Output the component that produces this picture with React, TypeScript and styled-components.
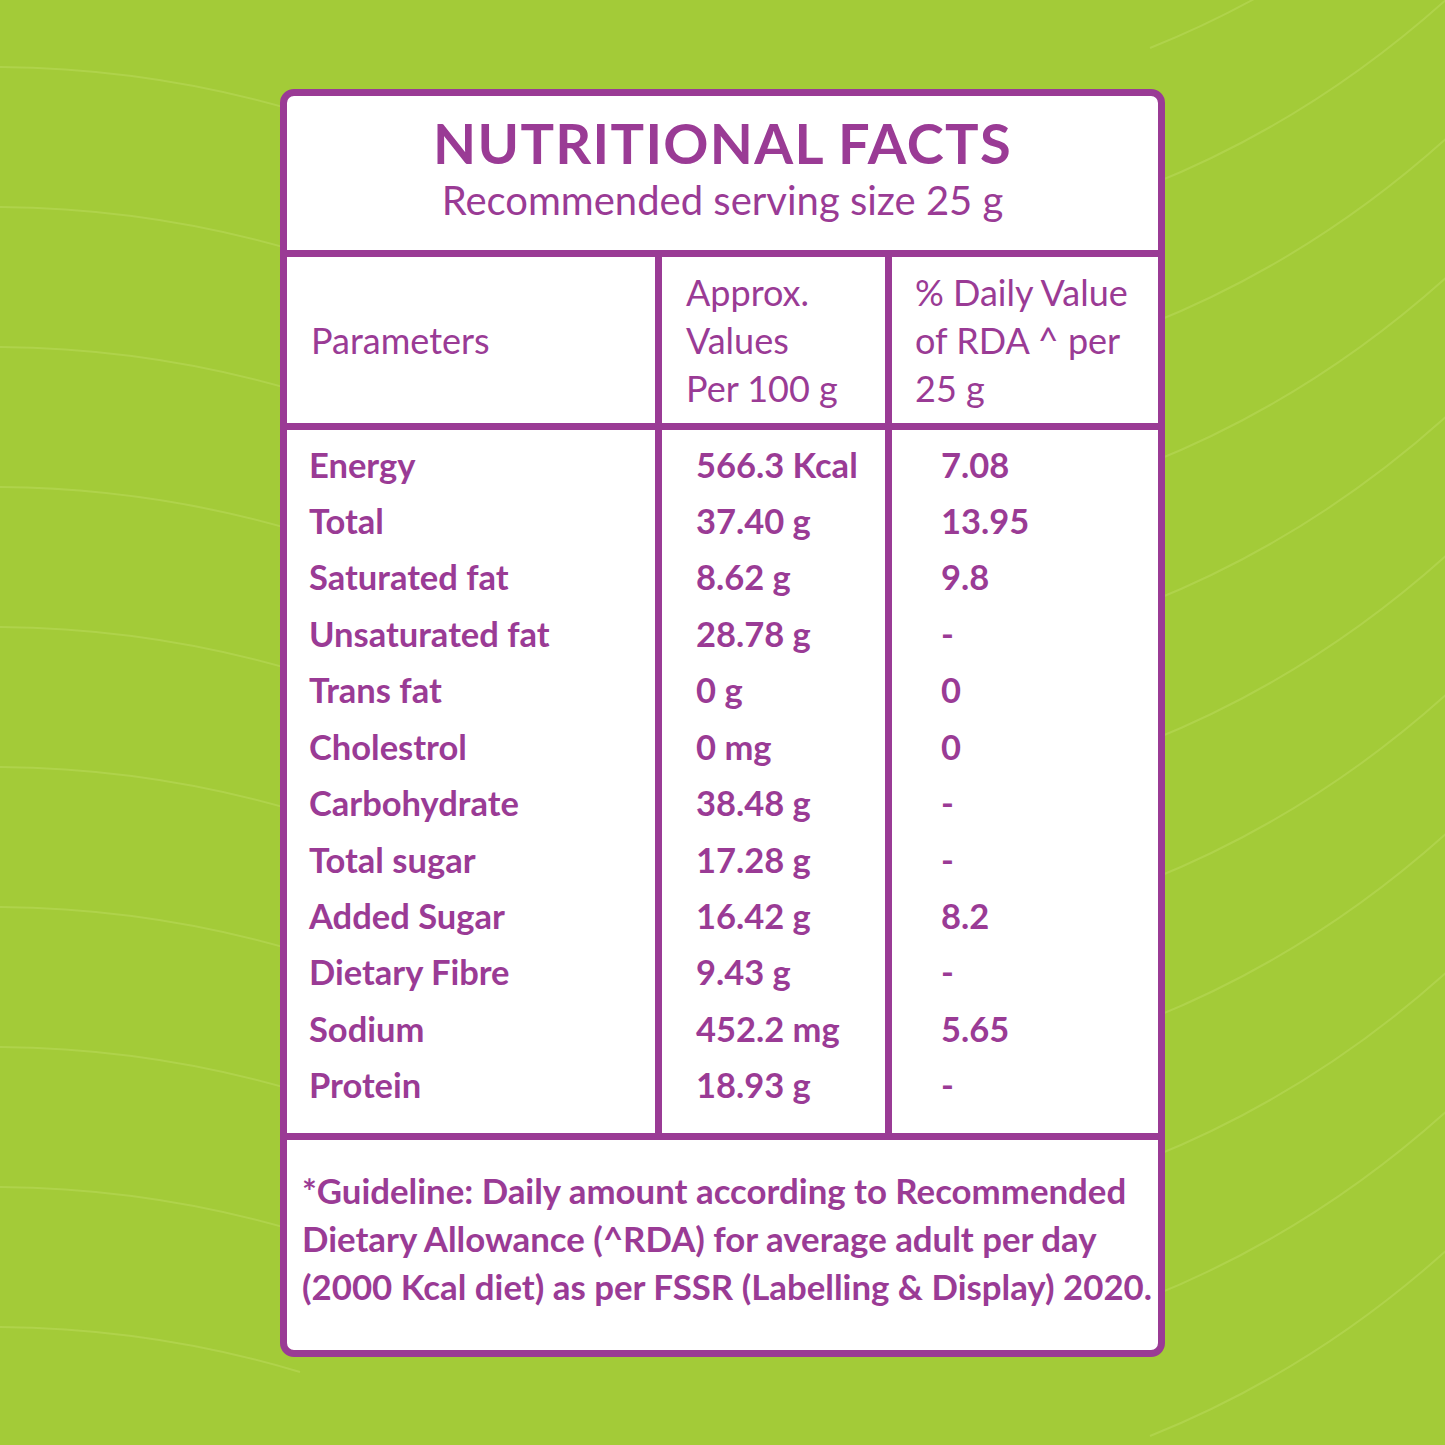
import React from "react";
import styled, { createGlobalStyle } from "styled-components";

const PURPLE = "#9a3b95";
const GREEN = "#a3cb38";

const Global = createGlobalStyle`
  html, body { margin: 0; padding: 0; }
  body { background: ${GREEN}; font-family: Lato, "Open Sans", sans-serif; }
`;

const Page = styled.div`
  position: relative;
  width: 1445px;
  height: 1445px;
  display: flex;
  align-items: center;
  justify-content: center;
  background: ${GREEN};
  overflow: hidden;
`;

const Waves = styled.svg`
  position: absolute;
  inset: 0;
  width: 1445px;
  height: 1445px;
`;

const Card = styled.div`
  position: relative;
  box-sizing: border-box;
  width: 885px;
  height: 1268px;
  border: 7px solid ${PURPLE};
  border-radius: 14px;
  background: #fff;
  display: flex;
  flex-direction: column;
  overflow: hidden;
  color: ${PURPLE};
`;

const Header = styled.div`
  box-sizing: border-box;
  height: 161px;
  padding-top: 16px;
  border-bottom: 7px solid ${PURPLE};
  display: flex;
  flex-direction: column;
  align-items: center;
`;

const Title = styled.div`
  font-size: 56px;
  font-weight: 700;
  letter-spacing: 1.3px;
  line-height: 62px;
  white-space: nowrap;
`;

const Subtitle = styled.div`
  font-size: 40px;
  font-weight: 400;
  line-height: 48px;
  margin-top: 2px;
  white-space: nowrap;
`;

const Table = styled.div`
  display: grid;
  grid-template-columns: 368px 223px 266px;
  grid-template-rows: 166px 703px;
  gap: 7px;
  background: ${PURPLE};
  border-bottom: 7px solid ${PURPLE};
`;

const HeadCell = styled.div<{ $pad: number }>`
  background: #fff;
  display: flex;
  flex-direction: column;
  justify-content: center;
  padding-left: ${(p) => p.$pad}px;
  font-size: 36px;
  line-height: 48px;
  font-weight: 400;
  white-space: nowrap;
`;

const BodyCell = styled.div<{ $pad: number }>`
  background: #fff;
  padding-left: ${(p) => p.$pad}px;
  padding-top: 7px;
  font-size: 34.5px;
  font-weight: 700;
`;

const Line = styled.div`
  height: 56.45px;
  line-height: 56.45px;
  white-space: nowrap;
`;

const Footer = styled.div`
  flex: 1;
  padding-left: 15px;
  display: flex;
  flex-direction: column;
  justify-content: center;
  font-size: 34.8px;
  font-weight: 700;
  line-height: 48px;
  white-space: nowrap;
  padding-bottom: 12px;
`;

const rows: [string, string, string][] = [
  ["Energy", "566.3 Kcal", "7.08"],
  ["Total", "37.40 g", "13.95"],
  ["Saturated fat", "8.62 g", "9.8"],
  ["Unsaturated fat", "28.78 g", "-"],
  ["Trans fat", "0 g", "0"],
  ["Cholestrol", "0 mg", "0"],
  ["Carbohydrate", "38.48 g", "-"],
  ["Total sugar", "17.28 g", "-"],
  ["Added Sugar", "16.42 g", "8.2"],
  ["Dietary Fibre", "9.43 g", "-"],
  ["Sodium", "452.2 mg", "5.65"],
  ["Protein", "18.93 g", "-"],
];

const leftWaves = [67, 207, 347, 487, 627, 767, 907, 1047, 1187, 1327];
const rightWaves = [-100, 40, 177, 316, 455, 594, 733, 872, 1011, 1150, 1289, 1428];

export default function App() {
  return (
    <>
      <Global />
      <Page>
        <Waves viewBox="0 0 1445 1445">
          <g fill="none" stroke="#b3d550" strokeWidth="2" opacity="0.8">
            {leftWaves.map((y) => (
              <path key={"l" + y} d={`M-10,${y} Q150,${y} 300,${y + 45}`} />
            ))}
            {rightWaves.map((y) => (
              <path key={"r" + y} d={`M1150,${y + 8} Q1320,${y - 60} 1460,${y - 190}`} />
            ))}
          </g>
        </Waves>
        <Card>
          <Header>
            <Title>NUTRITIONAL FACTS</Title>
            <Subtitle>Recommended serving size 25 g</Subtitle>
          </Header>
          <Table>
            <HeadCell $pad={24}>Parameters</HeadCell>
            <HeadCell $pad={24}>
              <div>Approx.</div>
              <div>Values</div>
              <div>Per 100 g</div>
            </HeadCell>
            <HeadCell $pad={23}>
              <div>% Daily Value</div>
              <div>of RDA ^ per</div>
              <div>25 g</div>
            </HeadCell>
            <BodyCell $pad={22}>
              {rows.map((r) => (
                <Line key={r[0]}>{r[0]}</Line>
              ))}
            </BodyCell>
            <BodyCell $pad={34}>
              {rows.map((r) => (
                <Line key={r[0]}>{r[1]}</Line>
              ))}
            </BodyCell>
            <BodyCell $pad={49}>
              {rows.map((r) => (
                <Line key={r[0]}>{r[2]}</Line>
              ))}
            </BodyCell>
          </Table>
          <Footer>
            <div>*Guideline: Daily amount according to Recommended</div>
            <div>Dietary Allowance (^RDA) for average adult per day</div>
            <div>(2000 Kcal diet) as per FSSR (Labelling &amp; Display) 2020.</div>
          </Footer>
        </Card>
      </Page>
    </>
  );
}
